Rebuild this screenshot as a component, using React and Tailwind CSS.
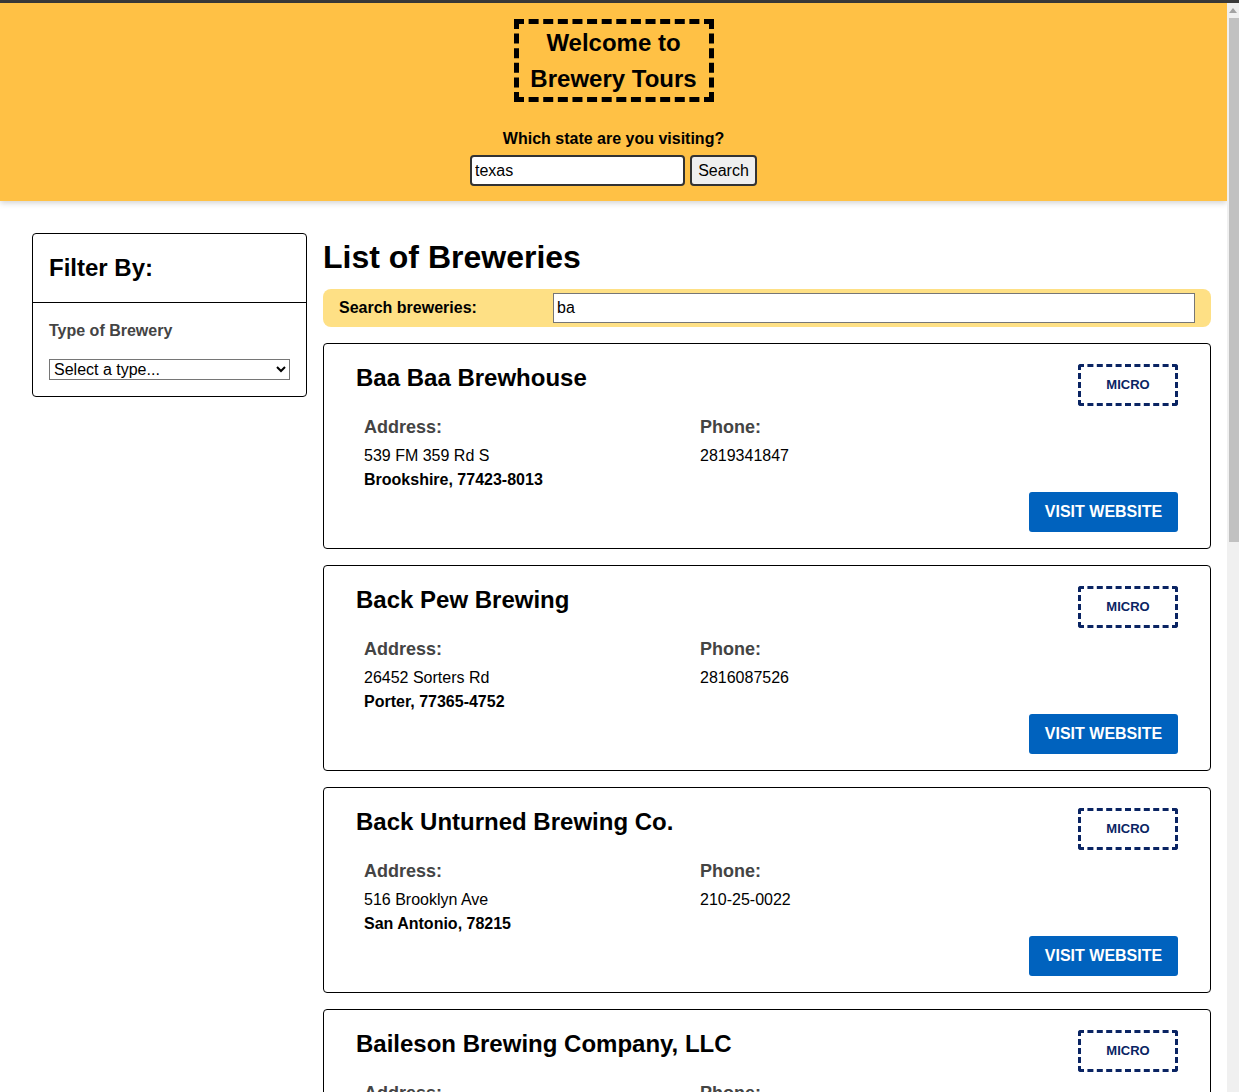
import { useState } from 'react'

const breweries = [
  { id: 1, name: 'Baa Baa Brewhouse', type: 'micro', street: '539 FM 359 Rd S', city: 'Brookshire', postal: '77423-8013', phone: '2819341847' },
  { id: 2, name: 'Back Pew Brewing', type: 'micro', street: '26452 Sorters Rd', city: 'Porter', postal: '77365-4752', phone: '2816087526' },
  { id: 3, name: 'Back Unturned Brewing Co.', type: 'micro', street: '516 Brooklyn Ave', city: 'San Antonio', postal: '78215', phone: '210-25-0022' },
  { id: 4, name: 'Baileson Brewing Company, LLC', type: 'micro', street: '4102 Gulf Fwy', city: 'Houston', postal: '77023', phone: '7135551234' },
  { id: 5, name: 'Bakfiets Brewing', type: 'micro', street: '1105 E Main St', city: 'Fredericksburg', postal: '78624', phone: '8305551188' },
]

function BreweryCard({ b }) {
  return (
    <li className="border border-black rounded-[4px] pt-[20px] pb-[16px] px-[32px] bg-white">
      <div className="flex items-start justify-between">
        <h2 className="text-[24px] leading-[28px] font-bold">{b.name}</h2>
        <span className="w-[100px] h-[42px] flex items-center justify-center border-[3px] border-dashed border-[#0a2463] rounded-[3px] text-[13px] font-bold text-[#0a2463] uppercase">
          {b.type}
        </span>
      </div>
      <div className="grid grid-cols-[336px_1fr] pl-[8px] mt-[10px]">
        <div>
          <h3 className="text-[18px] leading-[22px] font-bold text-[#444]">Address:</h3>
          <p className="mt-[6px] text-[16px] leading-[24px]">{b.street}</p>
          <p className="text-[16px] leading-[24px] font-bold">{b.city}, {b.postal}</p>
        </div>
        <div>
          <h3 className="text-[18px] leading-[22px] font-bold text-[#444]">Phone:</h3>
          <p className="mt-[6px] text-[16px] leading-[24px]">{b.phone}</p>
        </div>
      </div>
      <div className="flex justify-end">
        <a href="#" className="w-[149px] h-[40px] flex items-center justify-center bg-[#0062be] text-white font-bold text-[16px] rounded-[3px] uppercase">
          Visit Website
        </a>
      </div>
    </li>
  )
}

function FakeScrollbar() {
  // page scrollbar as seen in the screenshot
  return (
    <div className="fixed top-[3px] right-0 bottom-0 w-[12px] bg-[#f0f0f0] flex flex-col items-center">
      <div className="mt-[5px] w-0 h-0 border-l-[4px] border-r-[4px] border-b-[5px] border-l-transparent border-r-transparent border-b-[#a3a3a3]" />
      <div className="mt-[5px] ml-[2px] w-[10px] h-[524px] bg-[#c1c1c1]" />
    </div>
  )
}

export default function App() {
  const [state, setState] = useState('texas')
  const [query, setQuery] = useState('ba')

  return (
    <div className="min-h-screen bg-white text-black" style={{ fontFamily: '"Liberation Sans", Arial, sans-serif' }}>
      <div className="h-[3px] bg-[#3a3a3a]" />
      <div className="w-[1227px]">
        <header className="bg-[#ffc145] pt-[16px] pb-[15px] flex flex-col items-center shadow-[0_2px_6px_rgba(0,0,0,0.18)] relative">
          <h1 className="w-[200px] border-[5px] border-dashed border-black text-center text-[24px] leading-[36px] pt-[1px] font-bold">
            Welcome to
            <br />
            Brewery Tours
          </h1>
          <p className="mt-[27px] text-[16px] leading-[20px] font-bold">Which state are you visiting?</p>
          <form className="mt-[6px] flex gap-[5px]" onSubmit={e => e.preventDefault()}>
            <input
              value={state}
              onChange={e => setState(e.target.value)}
              className="w-[215px] h-[31px] bg-white border-2 border-[#333] rounded-[4px] px-[3px] text-[16px] outline-none"
            />
            <button className="w-[67px] h-[31px] bg-[#efefef] border-2 border-[#333] rounded-[4px] text-[16px]">Search</button>
          </form>
        </header>

        <main className="flex items-start gap-[16px] pt-[32px] pl-[32px] pr-[16px] pb-[32px]">
          <aside className="w-[275px] shrink-0 border border-black rounded-[4px]">
            <div className="px-[16px] pt-[20px] pb-[20px] border-b border-black">
              <h2 className="text-[24px] leading-[28px] font-bold">Filter By:</h2>
            </div>
            <div className="px-[16px] pt-[18px] pb-[14px]">
              <h3 className="text-[16px] leading-[20px] font-bold text-[#444]">Type of Brewery</h3>
              <select className="mt-[18px] w-[241px] h-[21px] border border-[#767676] text-[16px] bg-white">
                <option>Select a type...</option>
                <option>micro</option>
                <option>regional</option>
                <option>brewpub</option>
              </select>
            </div>
          </aside>

          <section className="flex-1">
            <h1 className="text-[32px] leading-[48px] font-bold">List of Breweries</h1>
            <div className="mt-[8px] bg-[#fee085] rounded-[8px] p-[4px] flex items-center">
              <label className="w-[226px] pl-[12px] text-[16px] font-bold">Search breweries:</label>
              <input
                value={query}
                onChange={e => setQuery(e.target.value)}
                className="flex-1 mr-[12px] h-[30px] bg-white border border-[#767676] px-[3px] text-[16px] outline-none"
              />
            </div>
            <ul className="mt-[16px] flex flex-col gap-[16px]">
              {breweries.map(b => (
                <BreweryCard key={b.id} b={b} />
              ))}
            </ul>
          </section>
        </main>
      </div>
      <FakeScrollbar />
    </div>
  )
}
